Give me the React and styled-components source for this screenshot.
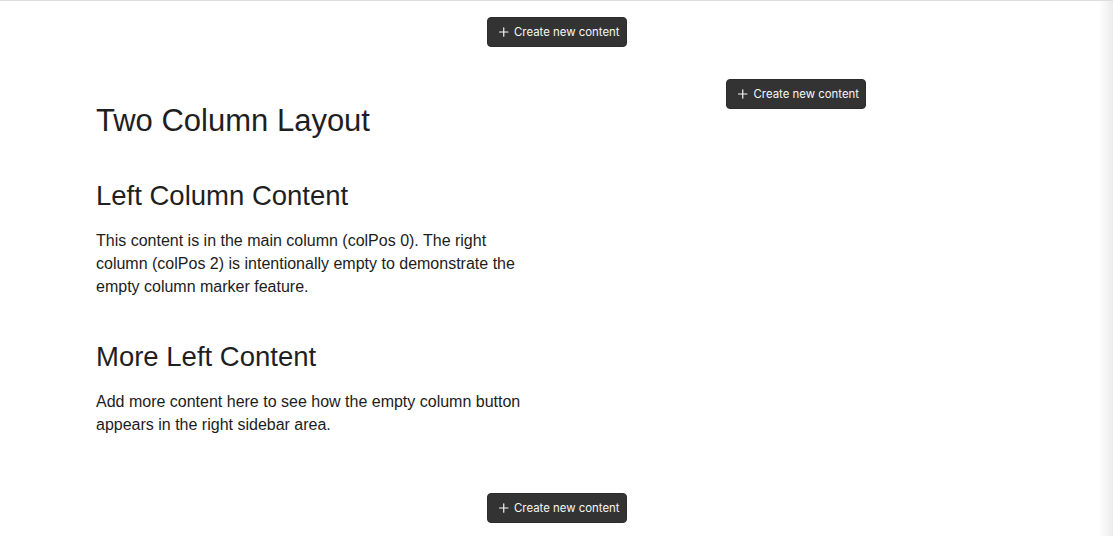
import React from "react";
import styled, { createGlobalStyle } from "styled-components";

const GlobalStyle = createGlobalStyle`
  html, body {
    margin: 0;
    padding: 0;
    background: #fff;
  }
  body {
    font-family: "Liberation Sans", Arial, Helvetica, sans-serif;
    color: #222;
  }
`;

// the faint shade on the right edge is part of the page background
const Page = styled.div`
  min-height: 536px;
  border-top: 1px solid #dedede;
  box-sizing: border-box;
  background: linear-gradient(to left, #ebebeb 0, #f3f3f3 5px, #ffffff 15px);
`;

const ButtonRow = styled.div`
  display: flex;
  justify-content: center;
  padding-top: ${(p) => p.$top || 0}px;
  margin-top: ${(p) => p.$gap || 0}px;
`;

const AddButton = styled.button`
  display: inline-flex;
  align-items: center;
  gap: 4px;
  height: 30px;
  width: 140px;
  padding: 0 6px 0 9px;
  box-sizing: border-box;
  background: #333333;
  border: 1px solid #2c2c2c;
  border-radius: 4px;
  color: #f7f7f7;
  font-family: "Inter", "Liberation Sans", sans-serif;
  font-size: 11.4px;
  white-space: nowrap;
  cursor: pointer;
`;

const Columns = styled.div`
  display: grid;
  grid-template-columns: 440px 520px;
  padding-left: 96px;
  margin-top: 32px;
`;

const LeftColumn = styled.div`
  padding-top: 23px;
`;

const RightColumn = styled.div`
  display: flex;
  justify-content: center;
  align-items: flex-start;
`;

const Title = styled.h1`
  margin: 0 0 40px;
  font-size: 31px;
  line-height: 1.2;
  font-weight: 400;
  color: #1f1f1f;
`;

const Heading = styled.h2`
  margin: 0 0 17px;
  font-size: 27.5px;
  line-height: 1.2;
  font-weight: 400;
  color: #1f1f1f;
`;

const Text = styled.p`
  margin: 0 0 42px;
  font-size: 16px;
  line-height: 23px;
  color: #1c1c1c;

  &:last-child {
    margin-bottom: 0;
  }
`;

const PlusIcon = () => (
  <svg width="16" height="16" viewBox="0 0 16 16" fill="none">
    <path d="M8 3v10M3 8h10" stroke="currentColor" strokeWidth="1.4" strokeLinecap="round" />
  </svg>
);

const CreateButton = () => (
  <AddButton type="button">
    <PlusIcon />
    Create new content
  </AddButton>
);

const App = () => {
  return (
    <>
      <GlobalStyle />
      <Page>
        <ButtonRow $top={16}>
          <CreateButton />
        </ButtonRow>
        <Columns>
          <LeftColumn>
            <Title>Two Column Layout</Title>
            <Heading>Left Column Content</Heading>
            <Text>
              This content is in the main column (colPos 0). The right column (colPos 2) is
              intentionally empty to demonstrate the empty column marker feature.
            </Text>
            <Heading>More Left Content</Heading>
            <Text>
              Add more content here to see how the empty column button appears in the right
              sidebar area.
            </Text>
          </LeftColumn>
          <RightColumn>
            <CreateButton />
          </RightColumn>
        </Columns>
        <ButtonRow $gap={57}>
          <CreateButton />
        </ButtonRow>
      </Page>
    </>
  );
};

export default App;
